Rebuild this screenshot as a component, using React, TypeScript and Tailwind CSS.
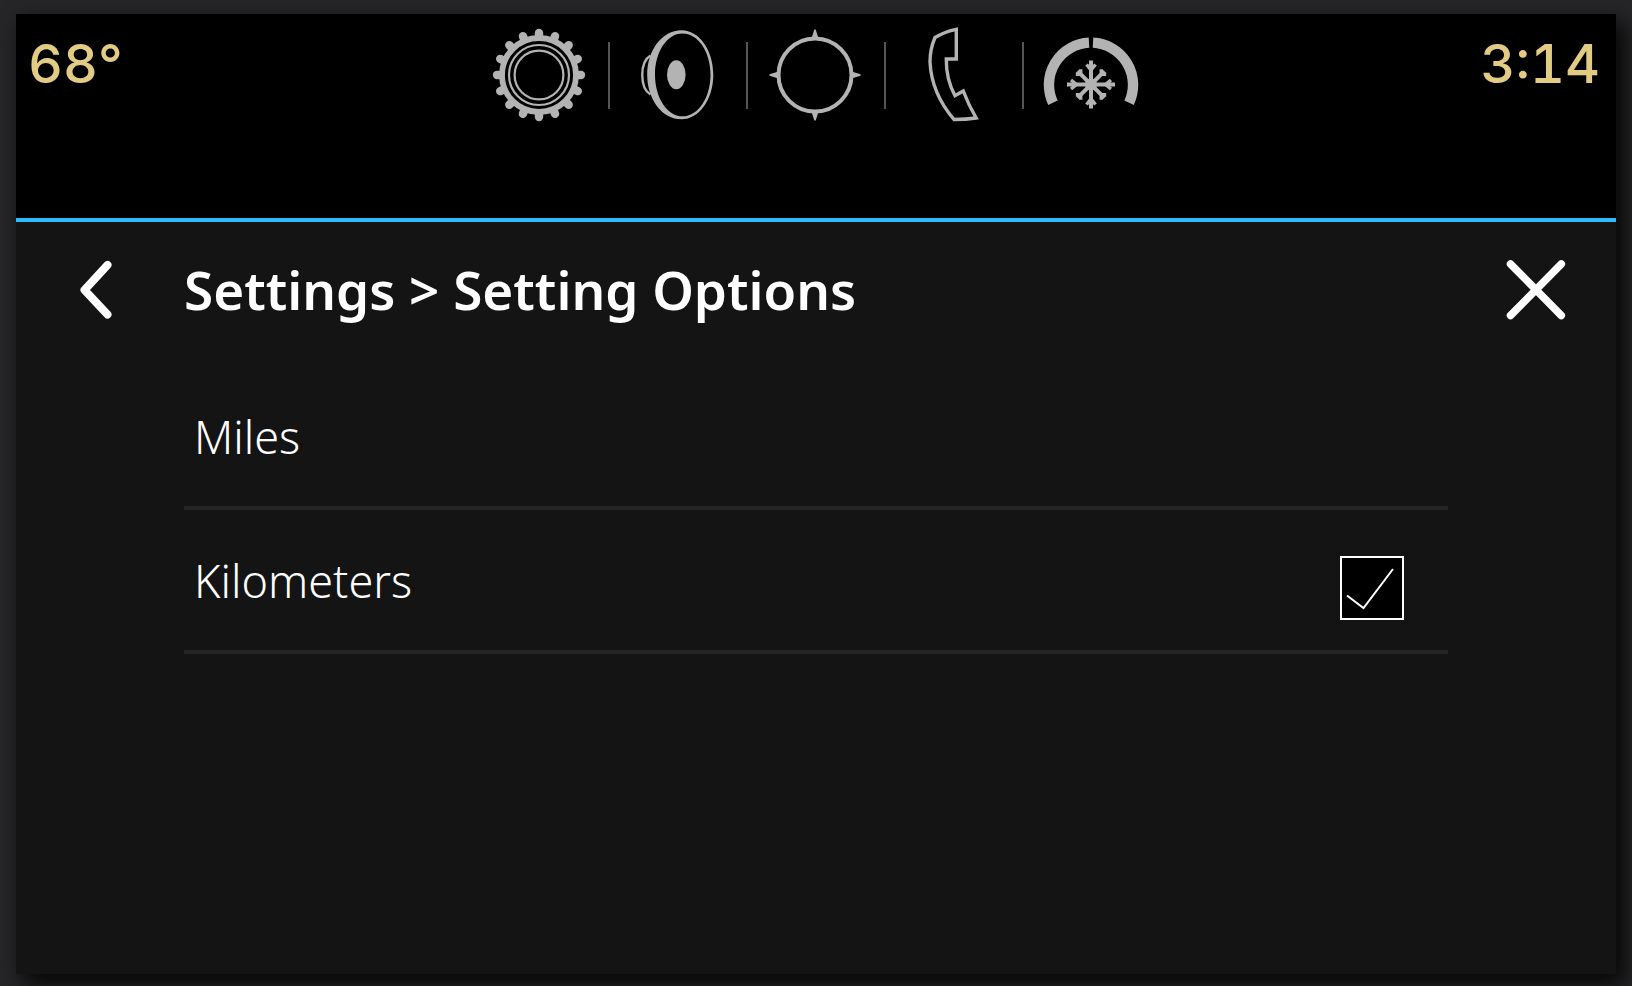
import { useState } from "react";
import type { ReactNode } from "react";

const GREY = "#b3b3b3";
const TEETH = Array.from({ length: 16 }, (_, i) => i * 22.5);

function Glyph({ children }: { children: ReactNode }) {
  return (
    <svg viewBox="0 0 100 100" className="size-[100px]" fill="none" aria-hidden="true">
      {children}
    </svg>
  );
}

function GearIcon() {
  return (
    <Glyph>
      <circle cx="49" cy="50" r="37" stroke={GREY} strokeWidth="5.8" />
      {TEETH.map((a) => (
        <path key={a} d="M49 11.5V8" stroke={GREY} strokeWidth="8.4" strokeLinecap="round" transform={`rotate(${a} 49 50)`} />
      ))}
      <circle cx="49" cy="50" r="30" stroke={GREY} strokeWidth="2.2" />
      <circle cx="49" cy="50" r="24.4" stroke={GREY} strokeWidth="2.2" />
    </Glyph>
  );
}

function SpeakerIcon() {
  return (
    <Glyph>
      <path d="M22.5 30.5C11.500 37 11.500 63 22.500 69.500" stroke={GREY} strokeWidth="2.4" />
      <path
        fillRule="evenodd"
        fill={GREY}
        d="M53.500 5.300C71 5.300 85.300 25 85.300 49.700S71 94.300 53.500 94.300C34 94.300 19.200 74 19.200 49.700S34 5.300 53.500 5.300ZM54.500 8.500C39 8.500 27 27 27 49.700S39 91.300 54.500 91.300C70 91.300 82.500 73 82.500 49.700S70 8.500 54.500 8.500Z"
      />
      <ellipse cx="48.3" cy="49.7" rx="9.3" ry="14.5" fill={GREY} />
    </Glyph>
  );
}

function CompassIcon() {
  return (
    <Glyph>
      <circle cx="49" cy="50" r="36.5" stroke={GREY} strokeWidth="4" />
      {[0, 90, 180, 270].map((a) => (
        <path key={a} d="M45.500 13.500L48.300 4.500H49.700L52.500 13.500Z" fill={GREY} transform={`rotate(${a} 49 50)`} />
      ))}
    </Glyph>
  );
}

function PhoneIcon() {
  return (
    <Glyph>
      <path
        d="M52.300 4.300Q41 6.500 31 12.500Q26 24 26 37C27 58 35 77 50 94.500Q62 94.500 72.200 93Q64.500 80 59.300 66L51 70.700Q42 54 42.300 34H52.300Z"
        stroke={GREY}
        strokeWidth="3.400"
      />
    </Glyph>
  );
}

function ClimateIcon() {
  return (
    <Glyph>
      <path d="M10.900 77.700A42.300 42.300 0 0 1 47 17.600M51 17.600A42.300 42.300 0 0 1 87.100 77.700" stroke={GREY} strokeWidth="10.400" />
      {[0, 90, 180, 270].map((a) => (
        <g key={a} stroke={GREY} transform={`rotate(${a} 49 59.500)`}>
          <path d="M49 59.500V35.500" strokeWidth="4" />
          <path d="M44.500 39.500L49 45L53.500 39.500" strokeWidth="3.400" />
        </g>
      ))}
      {[45, 135, 225, 315].map((a) => (
        <g key={a} stroke={GREY} transform={`rotate(${a} 49 59.500)`}>
          <path d="M49 59.500V40.500" strokeWidth="4" />
          <path d="M45.500 41.500L49 45L52.500 41.500" strokeWidth="3.400" />
        </g>
      ))}
      <circle cx="49" cy="59.500" r="6" fill={GREY} />
    </Glyph>
  );
}

const NAV = [
  { label: "Settings", icon: <GearIcon /> },
  { label: "Audio", icon: <SpeakerIcon /> },
  { label: "Navigation", icon: <CompassIcon /> },
  { label: "Phone", icon: <PhoneIcon /> },
  { label: "Climate", icon: <ClimateIcon /> },
];

function StatusBar() {
  return (
    <header className="grid h-[204px] grid-cols-[1fr_auto_1fr] items-start bg-black px-3">
      <p className="pt-[22px] font-['Inter',sans-serif] text-[54px]/[56px] font-medium text-[#e2cb83] tabular-nums">68°</p>
      <nav className="flex items-center pt-[11px]">
        {NAV.map((item, i) => (
          <div key={item.label} className="flex items-center">
            {i > 0 && <span className="h-[67px] w-[2px] bg-[#555555]" />}
            <button type="button" aria-label={item.label} className="flex w-[136px] justify-center">
              {item.icon}
            </button>
          </div>
        ))}
      </nav>
      <p className="pt-[22px] pr-1 text-right font-['Inter',sans-serif] text-[54px]/[56px] font-medium text-[#e2cb83] tabular-nums">3:14</p>
    </header>
  );
}

function UnitRow({ label, selected, onSelect }: { label: string; selected: boolean; onSelect: () => void }) {
  return (
    <label className="flex h-36 items-center justify-between border-b-4 border-[#242424] pr-11 pl-2.5 text-white">
      <span className="pt-0.5 font-['Noto_Sans',sans-serif] text-[45px]/[60px] font-[350]">{label}</span>
      <span className="relative mt-4 size-16">
        <input
          type="radio"
          name="distance-unit"
          checked={selected}
          onChange={onSelect}
          className="peer block size-16 appearance-none border-2 border-transparent checked:border-white checked:bg-black"
        />
        <svg
          viewBox="0 0 64 64"
          fill="none"
          stroke="white"
          strokeWidth="2"
          aria-hidden="true"
          className="pointer-events-none absolute inset-0 hidden size-16 peer-checked:block"
        >
          <path d="M7 39.500L23.500 52L53 13" />
        </svg>
      </span>
    </label>
  );
}

export default function App() {
  const [unit, setUnit] = useState("Kilometers");
  return (
    <div className="flex min-h-screen flex-col bg-[#262628] px-4 pt-[14px] pb-3">
      <div className="flex flex-1 flex-col bg-[#141414] shadow-[8px_10px_20px_2px_rgba(0,0,0,0.8)]">
        <StatusBar />
        <main className="border-t-4 border-[#29bdfb]">
          <div className="flex h-36 items-start pt-9 pr-12 pl-12">
            <button type="button" aria-label="Back" className="size-16">
              <svg viewBox="0 0 64 64" fill="none" stroke="white" strokeWidth="8" strokeLinecap="round" strokeLinejoin="round" className="size-16" aria-hidden="true">
                <path d="M43.500 7L20.500 32L43.500 56.500" />
              </svg>
            </button>
            <h1 className="ml-14 flex-1 font-['Noto_Sans',sans-serif] text-[53px]/[64px] font-semibold text-white">
              Settings &gt; Setting Options
            </h1>
            <button type="button" aria-label="Close" className="size-16">
              <svg viewBox="0 0 64 64" fill="none" stroke="white" strokeWidth="7.500" strokeLinecap="round" className="size-16" aria-hidden="true">
                <path d="M6.500 6L57.300 57.500M57.300 6L6.500 57.500" />
              </svg>
            </button>
          </div>
          <div className="mr-[168px] ml-[168px]" role="radiogroup" aria-label="Distance unit">
            {["Miles", "Kilometers"].map((u) => (
              <UnitRow key={u} label={u} selected={unit === u} onSelect={() => setUnit(u)} />
            ))}
          </div>
        </main>
      </div>
    </div>
  );
}
